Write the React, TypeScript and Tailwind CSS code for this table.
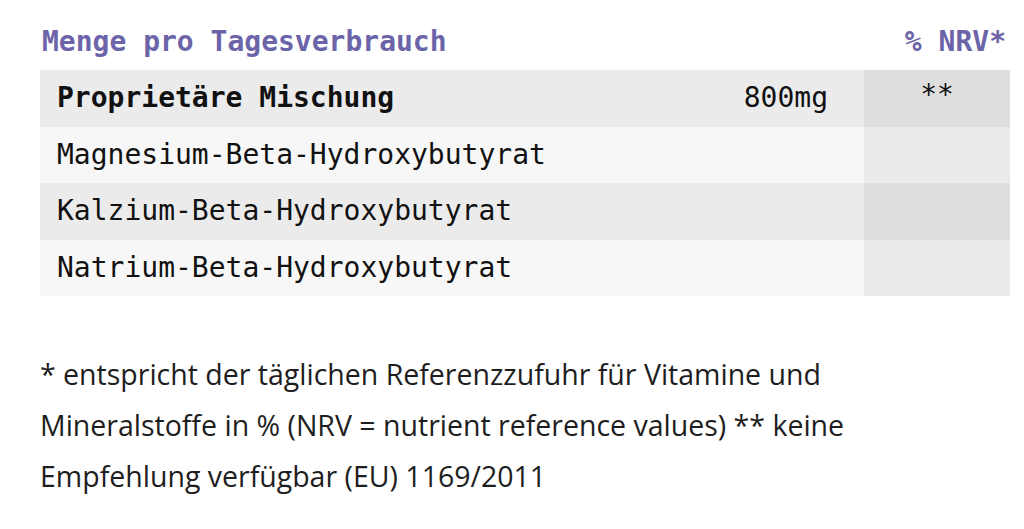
import React from 'react';

const rows = [
    { name: 'Proprietäre Mischung', amount: '800mg', nrv: '**', bold: true },
    { name: 'Magnesium-Beta-Hydroxybutyrat', amount: '', nrv: '' },
    { name: 'Kalzium-Beta-Hydroxybutyrat', amount: '', nrv: '' },
    { name: 'Natrium-Beta-Hydroxybutyrat', amount: '', nrv: '' },
];

const App = () => {
    return (
        <div className="w-[1024px] h-[529px] bg-white overflow-hidden">
            <div className="pl-[40px] pr-[14px]">
                <div className="flex justify-between items-center pt-[26px] pb-[12px] text-[28px] leading-[32px] font-bold text-[#6c64a8] font-['DejaVu_Sans_Mono',monospace]">
                    <span className="pl-[2px]">Menge pro Tagesverbrauch</span>
                    <span className="pr-[4px]">% NRV*</span>
                </div>
                <div className="text-[28px] text-[#111] font-['DejaVu_Sans_Mono',monospace]">
                    {rows.map((r, i) => (
                        <div
                            key={r.name}
                            className={`flex h-[56.5px] items-center ${i % 2 === 0 ? 'bg-[#ebebeb]' : 'bg-[#f7f7f7]'}`}
                        >
                            <div className={`flex-1 pl-[17px] ${r.bold ? 'font-bold' : ''}`}>{r.name}</div>
                            <div className="pr-[36px]">{r.amount}</div>
                            <div
                                className={`w-[146px] h-full flex items-center justify-center pb-[6px] ${i % 2 === 0 ? 'bg-[#dedede]' : 'bg-[#ebebeb]'}`}
                            >
                                {r.nrv}
                            </div>
                        </div>
                    ))}
                </div>
                <p className="mt-[53px] text-[28.5px] leading-[51px] text-[#1e1e1e] font-['Open_Sans',sans-serif]">
                    * entspricht der täglichen Referenzzufuhr für Vitamine und
                    <br />
                    Mineralstoffe in % (NRV = nutrient reference values) ** keine
                    <br />
                    Empfehlung verfügbar (EU) 1169/2011
                </p>
            </div>
        </div>
    );
};

export default App;
